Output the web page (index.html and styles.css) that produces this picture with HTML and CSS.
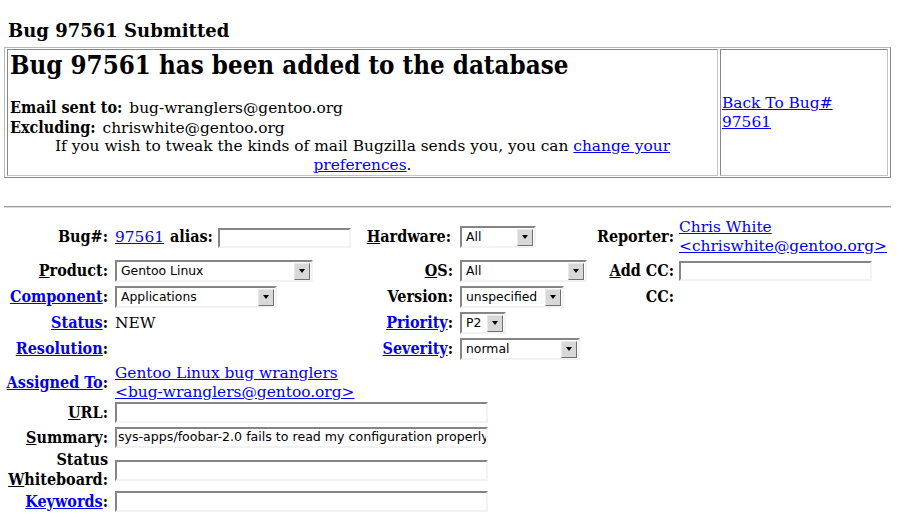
FILE: index.html
```html
<!DOCTYPE html>
<html>
<head>
<meta charset="utf-8">
<title>Bug 97561 Submitted</title>
<link rel="stylesheet" href="styles.css">
</head>
<body>
<div class="banner">Bug 97561 Submitted</div>
<table class="result">
  <tr>
    <td class="main">
      <h2 class="added">Bug 97561 has been added to the database</h2>
      <p class="mail"><b>Email sent to:</b> bug-wranglers@gentoo.org<br><b>Excluding:</b> chriswhite@gentoo.org</p>
      <p class="tweak">If you wish to tweak the kinds of mail Bugzilla sends you, you can <a href="#">change your preferences</a>.</p>
    </td>
    <td class="back"><a href="#">Back To Bug# 97561</a></td>
  </tr>
</table>
<hr class="rule">
<table class="form">
  <colgroup>
    <col class="c1"><col class="c2"><col class="c3"><col class="c4"><col class="c5"><col class="c6">
  </colgroup>
  <tr class="r1">
    <td class="lbl"><b>Bug#:</b></td>
    <td class="val"><a href="#">97561</a> <b class="alias">alias:</b> <span class="inp w-alias"></span></td>
    <td class="lbl hw"><b><u>H</u>ardware:</b></td>
    <td class="val"><span class="sel w-hw"><span class="opt">All</span><span class="btn"><i class="tri"></i></span></span></td>
    <td class="lbl"><b>Reporter:</b></td>
    <td class="val wrap"><a href="#">Chris White &lt;chriswhite@gentoo.org&gt;</a></td>
  </tr>
  <tr class="r2">
    <td class="lbl"><b><u>P</u>roduct:</b></td>
    <td class="val"><span class="sel w-prod"><span class="opt">Gentoo Linux</span><span class="btn"><i class="tri"></i></span></span></td>
    <td class="lbl"><b><u>O</u>S:</b></td>
    <td class="val"><span class="sel w-os"><span class="opt">All</span><span class="btn"><i class="tri"></i></span></span></td>
    <td class="lbl"><b><u>A</u>dd CC:</b></td>
    <td class="val"><span class="inp w-cc"></span></td>
  </tr>
  <tr class="r3">
    <td class="lbl"><b><a href="#">Component</a>:</b></td>
    <td class="val"><span class="sel w-comp"><span class="opt">Applications</span><span class="btn"><i class="tri"></i></span></span></td>
    <td class="lbl"><b>Version:</b></td>
    <td class="val"><span class="sel w-ver"><span class="opt">unspecified</span><span class="btn"><i class="tri"></i></span></span></td>
    <td class="lbl"><b>CC:</b></td>
    <td class="val"></td>
  </tr>
  <tr class="r4">
    <td class="lbl"><b><a href="#">Status</a>:</b></td>
    <td class="val">NEW</td>
    <td class="lbl"><b><a href="#">Priority</a>:</b></td>
    <td class="val"><span class="sel w-pri"><span class="opt">P2</span><span class="btn"><i class="tri"></i></span></span></td>
    <td></td><td></td>
  </tr>
  <tr class="r5">
    <td class="lbl"><b><a href="#">Resolution</a>:</b></td>
    <td class="val"></td>
    <td class="lbl"><b><a href="#">Severity</a>:</b></td>
    <td class="val"><span class="sel w-sev"><span class="opt">normal</span><span class="btn"><i class="tri"></i></span></span></td>
    <td></td><td></td>
  </tr>
  <tr class="r6">
    <td class="lbl"><b><a href="#">Assigned To</a>:</b></td>
    <td class="val" colspan="5"><a href="#">Gentoo Linux bug wranglers<br>&lt;bug-wranglers@gentoo.org&gt;</a></td>
  </tr>
  <tr class="r7">
    <td class="lbl"><b><u>U</u>RL:</b></td>
    <td class="val" colspan="5"><span class="inp w-long"></span></td>
  </tr>
  <tr class="r8">
    <td class="lbl"><b><u>S</u>ummary:</b></td>
    <td class="val" colspan="5"><span class="inp w-long"><span class="txt">sys-apps/foobar-2.0 fails to read my configuration properly</span></span></td>
  </tr>
  <tr class="r9">
    <td class="lbl"><b>Status<br><u>W</u>hiteboard:</b></td>
    <td class="val" colspan="5"><span class="inp w-long"></span></td>
  </tr>
  <tr class="r10">
    <td class="lbl"><b><a href="#">Keywords</a>:</b></td>
    <td class="val" colspan="5"><span class="inp w-long"></span></td>
  </tr>
</table>
</body>
</html>
```

FILE: styles.css
```css
html, body {
  background: #fff;
}
body {
  margin: 0 6px 0 4px;
  font-family: "DejaVu Serif", serif;
  font-size: 15.4px;
  color: #000;
}
a {
  color: #0000ee;
}
.banner {
  font-weight: bold;
  font-size: 18px;
  padding: 20px 0 0 4px;
  height: 27px;
}
.result {
  width: 100%;
  border-collapse: separate;
  border-spacing: 2px 1px;
  border: 1px solid;
  border-color: #b8b8b8 #888 #888 #b8b8b8;
}
.result td {
  border: 1px solid;
  border-color: #888 #c4c4c4 #c4c4c4 #888;
  padding: 1px 2px;
}
.main {
  width: 705px;
}
.added,
.mail b,
.form b {
  font-family: "DejaVu Serif Condensed", "DejaVu Serif", serif;
  font-stretch: semi-condensed;
  font-weight: bold;
}
.mail b,
.form b {
  font-size: 16px;
}
.added {
  font-size: 25.7px;
  margin: 1px 0 20px;
  line-height: 26px;
}
.mail {
  margin: 0;
  line-height: 19px;
}
.mail b {
  margin-right: 2px;
}
.tweak {
  margin: -1px 0 -1px;
  text-align: center;
  line-height: 19px;
}
.back {
  vertical-align: middle;
  line-height: 19px;
  padding-left: 1px !important;
}
.rule {
  margin: 28px 0 9px;
  border: 0;
  border-top: 1px solid #999;
  border-bottom: 1px solid #ddd;
  height: 0;
}
.form {
  border-collapse: collapse;
  border-spacing: 0;
  table-layout: fixed;
  width: 887px;
}
.c1 { width: 109px; }
.c2 { width: 245px; }
.c3 { width: 100px; }
.c4 { width: 134px; }
.c5 { width: 85px; }
.c6 { width: 214px; }
.form td {
  padding: 2px 0;
  vertical-align: middle;
  line-height: 19px;
  white-space: nowrap;
}
.form td.lbl {
  text-align: right;
  padding-right: 5px;
}
.form td.lbl.hw {
  padding-right: 7px;
}
.form tr td:nth-child(5).lbl {
  padding-right: 3px;
}
.form td.val {
  padding-left: 2px;
}
.form td.wrap {
  white-space: normal;
}
.form .r1 td {
  padding-top: 1px;
}
.form .r6 td {
  padding-bottom: 0;
}
.form .r7 td {
  padding-top: 0;
}
.form .r9 td {
  padding-top: 0;
  padding-bottom: 1px;
}
.form .r10 td {
  padding-top: 0;
}
.alias {
  margin-left: 1px;
}
.inp {
  display: inline-block;
  vertical-align: middle;
  box-sizing: border-box;
  height: 20px;
  border: 2px solid;
  border-color: #858585 #f2f2f2 #f2f2f2 #858585;
  background: #fff;
  overflow: hidden;
  font-family: "DejaVu Sans", sans-serif;
  font-size: 12.6px;
  line-height: 16px;
  white-space: nowrap;
}
.inp .txt {
  padding-left: 1px;
}
.w-alias { width: 133px; }
.w-cc { width: 193px; }
.w-long { width: 373px; height: 21px; }
.sel {
  display: inline-flex;
  align-items: center;
  vertical-align: middle;
  box-sizing: border-box;
  height: 22px;
  border: 2px solid;
  border-color: #858585 #f2f2f2 #f2f2f2 #858585;
  background: #fff;
  font-family: "DejaVu Sans", sans-serif;
  font-size: 12.4px;
  line-height: 16px;
}
.opt {
  flex: 1;
  padding-left: 4px;
  white-space: nowrap;
  overflow: hidden;
}
.btn {
  flex: none;
  box-sizing: border-box;
  width: 16px;
  height: 17px;
  margin-right: 1px;
  background: #d8d8d8;
  border: 1px solid;
  border-color: #e8e8e8 #707070 #707070 #e8e8e8;
  display: flex;
  align-items: center;
  justify-content: center;
}
.tri {
  width: 0;
  height: 0;
  border-left: 3px solid transparent;
  border-right: 3px solid transparent;
  border-top: 4px solid #000;
}
.w-hw { width: 76px; }
.w-prod { width: 198px; }
.w-os { width: 127px; }
.w-comp { width: 162px; }
.w-ver { width: 104px; }
.w-pri { width: 46px; }
.w-sev { width: 120px; }
```
